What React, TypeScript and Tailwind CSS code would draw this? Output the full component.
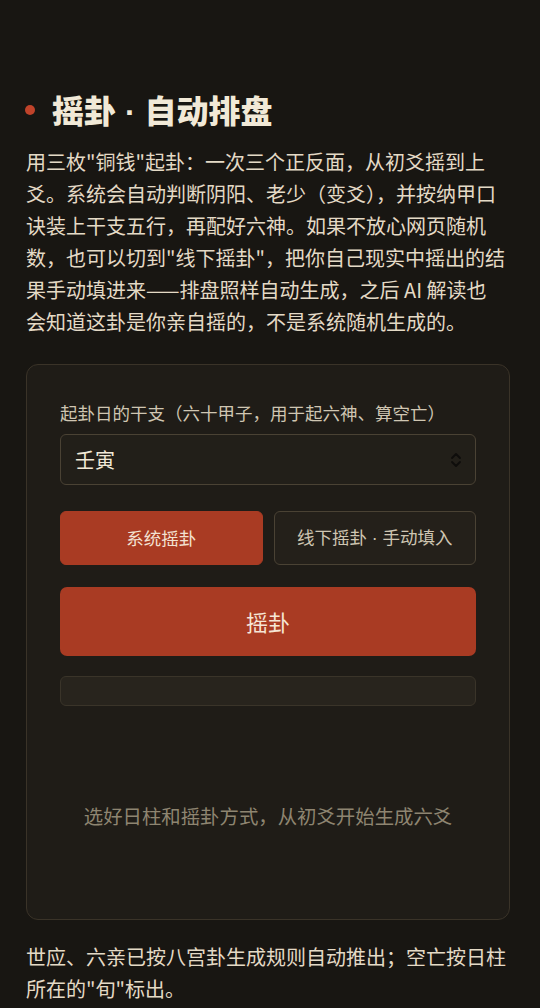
import { useState } from 'react'

const sans = { fontFamily: '"Noto Sans CJK SC", "Noto Sans", sans-serif' }
const latin = { fontFamily: '"Liberation Sans", sans-serif' }

function UpDown(): JSX.Element {
  return (
    <svg width="12" height="18" viewBox="0 0 12 18" fill="none" stroke="#0e0d0b" strokeWidth="1.8" strokeLinecap="round" strokeLinejoin="round">
      <path d="M2 7 L6 3 L10 7" />
      <path d="M2 11 L6 15 L10 11" />
    </svg>
  )
}

const intro = [
  '用三枚"铜钱"起卦：一次三个正反面，从初爻摇到上',
  '爻。系统会自动判断阴阳、老少（变爻），并按纳甲口',
  '诀装上干支五行，再配好六神。如果不放心网页随机',
  '数，也可以切到"线下摇卦"，把你自己现实中摇出的结',
  '果手动填进来——排盘照样自动生成，之后 AI 解读也',
  '会知道这卦是你亲自摇的，不是系统随机生成的。',
]

export default function App(): JSX.Element {
  const [mode, setMode] = useState<'system' | 'manual'>('system')

  const tabClass = (active: boolean): string =>
    `h-[54px] rounded-[6px] border text-[17.5px] ${
      active
        ? 'bg-[#a93b23] border-[#a93b23] text-[#f3e2d2]'
        : 'bg-[#24201a] border-[#4a4234] text-[#cfc6b2]'
    }`

  return (
    <div
      className="min-h-[1008px] w-[540px] bg-[#181612] pl-[26px] pr-[30px] pt-[90px] pb-6 text-[#e6dcc8]"
      style={sans}
    >
      {/* Heading */}
      <div className="flex items-center h-[40px]">
        <span className="ml-[-1px] w-[10px] h-[10px] rounded-full bg-[#c0432a] shrink-0" />
        <h1 className="ml-[17px] text-[32px] leading-[40px] font-black text-[#f1e9d7]">
          摇卦<span style={latin}> · </span>自动排盘
        </h1>
      </div>

      <p className="mt-[16px] text-[20px] leading-[32px] text-[#e4dac6]">
        {intro.map((line, i) => (
          <span key={i} className="block whitespace-nowrap">{line}</span>
        ))}
      </p>

      {/* Card */}
      <div className="mt-[26px] rounded-[12px] border border-[#3a3328] bg-[#1f1c17] px-[33px] pt-[34px] pb-[34px]">
        <div className="text-[17.5px] leading-[28px] text-[#cfc6b2]">起卦日的干支（六十甲子，用于起六神、算空亡）</div>

        <div className="mt-[7px] flex h-[51px] items-center justify-between rounded-[6px] border border-[#4a4234] bg-[#221f19] pl-[14px] pr-[13px]">
          <span className="text-[20px] text-[#f1e9d7]">壬寅</span>
          <UpDown />
        </div>

        <div className="mt-[26px] grid grid-cols-2 gap-[11px]">
          <button onClick={() => setMode('system')} className={tabClass(mode === 'system')}>
            系统摇卦
          </button>
          <button onClick={() => setMode('manual')} className={tabClass(mode === 'manual')}>
            线下摇卦<span style={latin}> · </span>手动填入
          </button>
        </div>

        <button className="mt-[22px] h-[69px] w-full rounded-[7px] bg-[#a93b23] text-[22px] text-[#f6e6d6]">
          摇卦
        </button>

        <div className="mt-[20px] h-[30px] rounded-[6px] border border-[#3a3429] bg-[#28241d]" />

        <div className="pt-[96px] pb-[55px] text-center text-[19.4px] leading-[28px] text-[#8e8571]">
          选好日柱和摇卦方式，从初爻开始生成六爻
        </div>
      </div>

      <p className="mt-[21px] text-[20px] leading-[32px] text-[#e4dac6]">
        世应、六亲已按八宫卦生成规则自动推出；空亡按日柱所在的"旬"标出。
      </p>
    </div>
  )
}
